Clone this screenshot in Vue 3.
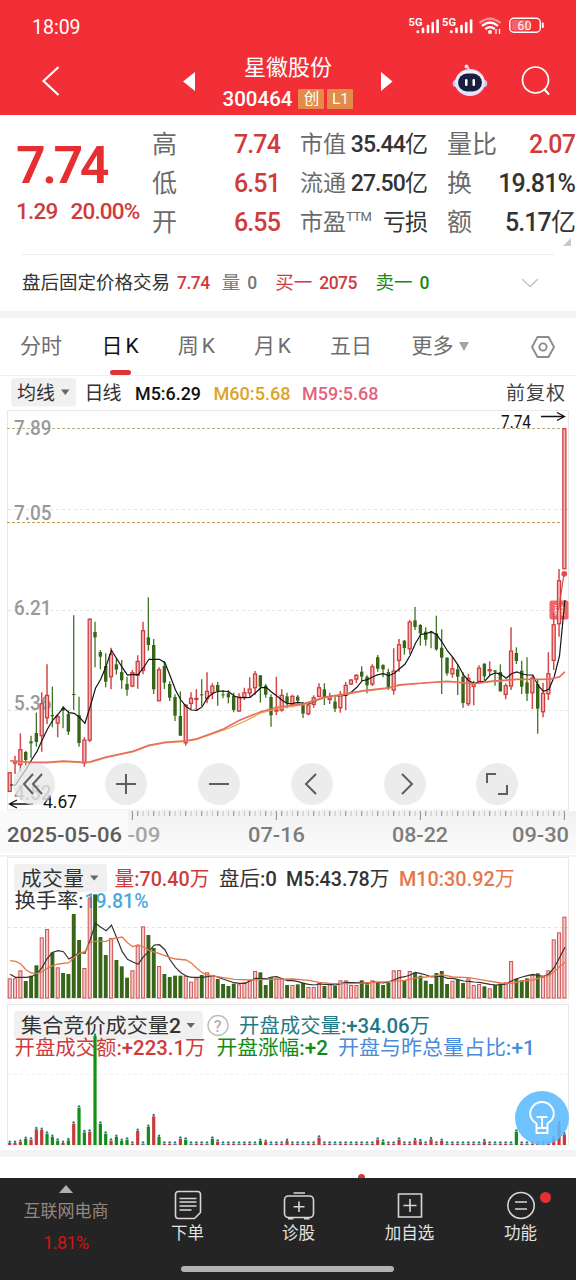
<script setup>
import { computed } from 'vue'

const STEP = 16 / 3
const FIRST = 9.7

const quotes = [
  [
    { label: '高', value: '7.74', tone: 'up' },
    { label: '低', value: '6.51', tone: 'up' },
    { label: '开', value: '6.55', tone: 'up' }
  ],
  [
    { label: '市值', value: '35.44', unit: '亿' },
    { label: '流通', value: '27.50', unit: '亿' },
    { label: '市盈', sup: 'TTM', unit: '亏损' }
  ],
  [
    { label: '量比', value: '2.07', tone: 'up' },
    { label: '换', value: '19.81%' },
    { label: '额', value: '5.17', unit: '亿' }
  ]
]

const tabs = ['分时', '日K', '周K', '月K', '五日']
const activeTab = '日K'

// [rising, high, body top, body bottom, low] in thirds of a pixel
const candleData = [
  [1, 577, 577, 633, 633], [1, 527, 543, 548, 582], [1, 460, 508, 553, 575], [0, 513, 516, 540, 557],
  [0, 467, 484, 490, 535], [0, 398, 459, 486, 500], [1, 337, 370, 466, 515], [1, 253, 345, 412, 432],
  [0, 320, 405, 409, 442], [1, 405, 409, 428, 472], [0, 378, 384, 392, 445], [0, 392, 402, 455, 465],
  [0, 106, 342, 345, 390], [0, 350, 405, 489, 500], [1, 472, 479, 548, 560], [1, 115, 117, 479, 486],
  [0, 125, 156, 172, 262], [0, 210, 216, 230, 268], [0, 220, 258, 305, 322], [1, 203, 222, 289, 328],
  [0, 233, 253, 269, 284], [0, 240, 276, 301, 326], [0, 290, 312, 329, 347], [1, 270, 277, 317, 322],
  [1, 226, 243, 285, 326], [1, 125, 151, 270, 283], [0, 52, 172, 195, 212], [0, 177, 195, 328, 342],
  [1, 262, 268, 361, 362], [0, 243, 258, 308, 327], [0, 304, 312, 353, 363], [0, 343, 351, 407, 423],
  [0, 334, 408, 467, 468], [1, 373, 374, 487, 497], [1, 337, 354, 369, 387], [1, 328, 354, 357, 390],
  [0, 298, 343, 345, 378], [1, 277, 333, 355, 370], [1, 310, 317, 338, 358], [0, 306, 315, 333, 377],
  [0, 330, 343, 346, 355], [0, 330, 340, 352, 370], [0, 338, 348, 390, 397], [1, 340, 350, 392, 395],
  [1, 323, 337, 350, 360], [1, 292, 326, 338, 350], [1, 273, 281, 322, 345], [0, 285, 286, 320, 368],
  [0, 312, 317, 344, 353], [0, 343, 351, 406, 440], [1, 290, 388, 392, 405], [1, 327, 345, 389, 395],
  [0, 338, 349, 370, 385], [1, 344, 348, 372, 372], [0, 345, 350, 362, 375], [0, 365, 372, 401, 414],
  [1, 368, 374, 400, 406], [1, 346, 352, 372, 383], [1, 310, 322, 348, 352], [0, 310, 328, 352, 375],
  [1, 338, 352, 357, 372], [0, 345, 365, 386, 396], [1, 333, 344, 382, 398], [1, 306, 315, 344, 390],
  [1, 297, 299, 311, 315], [1, 283, 285, 296, 310], [0, 259, 275, 290, 303], [0, 286, 290, 316, 340],
  [1, 253, 259, 311, 318], [0, 225, 232, 266, 275], [0, 253, 255, 268, 292], [0, 266, 276, 325, 330],
  [1, 205, 272, 329, 344], [1, 177, 193, 240, 275], [0, 180, 182, 204, 224], [1, 120, 125, 205, 222],
  [0, 81, 121, 141, 150], [0, 132, 135, 160, 197], [0, 142, 155, 179, 197], [0, 152, 155, 160, 205],
  [0, 107, 160, 208, 212], [0, 148, 203, 233, 342], [0, 232, 233, 280, 287], [1, 230, 265, 280, 293],
  [0, 252, 268, 290, 345], [0, 277, 290, 369, 383], [1, 282, 294, 370, 378], [1, 302, 310, 318, 376],
  [1, 256, 263, 303, 305], [0, 250, 251, 289, 301], [1, 244, 268, 271, 287], [0, 270, 271, 275, 317],
  [0, 253, 276, 334, 335], [1, 310, 316, 342, 358], [1, 142, 212, 317, 330], [0, 202, 219, 243, 252],
  [0, 242, 272, 320, 342], [0, 232, 307, 341, 363], [1, 285, 293, 337, 387], [0, 300, 312, 386, 461],
  [1, 308, 339, 394, 412], [1, 217, 280, 340, 360], [1, 98, 133, 240, 270], [1, -33, 1, 130, 170],
  [1, -456, -455, -35, -33]
]

const ma5 = [
  615, 615, 590, 568, 540, 515, 480, 447, 420, 402, 382, 398, 400, 412, 430, 380, 325, 297, 257, 211, 237, 262,
  285, 283, 284, 263, 238, 238, 238, 248, 288, 330, 360, 380, 390, 391, 380, 353, 340, 334, 333, 335, 348, 353,
  353, 352, 338, 323, 322, 336, 348, 361, 371, 370, 367, 370, 371, 365, 358, 351, 349, 348, 347, 346, 336, 322,
  302, 299, 290, 284, 281, 287, 280, 266, 253, 226, 190, 163, 161, 155, 165, 187, 213, 232, 256, 285, 303, 310,
  306, 303, 285, 279, 283, 295, 281, 276, 282, 285, 285, 317, 334, 328, 290, 228, 60
]
// slow averages are kept as [bar, value] pairs
const ma60 = [
  [0, 543], [4, 549], [7, 549], [10, 545], [14, 549], [15, 547], [18, 533], [23, 516], [26, 498], [29, 489],
  [33, 484], [35, 478], [38, 461], [41, 445], [44, 424], [47, 399], [50, 387], [55, 374], [59, 354], [63, 343],
  [66, 334], [71, 325], [73, 316], [78, 309], [82, 305], [87, 312], [90, 306], [95, 299], [98, 299], [101, 299],
  [103, 291], [104, 276]
]
const ma59 = [
  [0, 542], [4, 547], [7, 547], [10, 543], [14, 547], [15, 545], [18, 531], [23, 514], [26, 496], [29, 487],
  [33, 482], [35, 476], [38, 459], [40, 447], [43, 421], [47, 395], [50, 382], [55, 371], [59, 351], [63, 341],
  [66, 332], [71, 323], [73, 314], [78, 308], [82, 304], [87, 311], [90, 304], [95, 298], [98, 298], [101, 298],
  [103, 290], [104, 275]
]

const volumeData = [
  370, 370, 346, 378, 362, 331, 247, 222, 292, 337, 354, 357, 177, 255, 339, 128, 118, 246, 300, 249, 315, 334,
  368, 346, 272, 214, 240, 279, 333, 357, 366, 362, 362, 362, 380, 370, 360, 352, 362, 372, 387, 393, 386, 388,
  382, 375, 348, 352, 390, 367, 370, 370, 390, 390, 388, 383, 396, 396, 384, 393, 388, 392, 376, 376, 390, 390,
  376, 388, 376, 382, 390, 382, 346, 345, 375, 348, 352, 362, 377, 387, 354, 348, 387, 377, 375, 384, 370, 390,
  387, 394, 400, 390, 386, 382, 318, 371, 376, 370, 360, 355, 366, 346, 253, 232, 185
]
const volMa5 = [
  358, 367, 367, 367, 365, 356, 337, 309, 292, 287, 290, 312, 303, 292, 295, 255, 205, 217, 227, 210, 250, 290,
  313, 321, 328, 305, 289, 270, 269, 284, 315, 337, 353, 363, 367, 367, 367, 365, 362, 367, 373, 378, 383, 385,
  385, 378, 370, 371, 371, 366, 365, 371, 377, 377, 380, 385, 388, 390, 387, 388, 388, 390, 386, 382, 383, 383,
  382, 385, 381, 382, 384, 380, 374, 368, 365, 360, 352, 356, 360, 366, 364, 364, 370, 370, 374, 378, 379, 381,
  382, 385, 388, 390, 389, 387, 378, 371, 366, 362, 358, 362, 364, 357, 338, 308, 277
]
const volMa10 = [
  [0, 317], [1, 319], [2, 327], [3, 345], [4, 354], [5, 356], [6, 350], [7, 340], [8, 332], [9, 327], [11, 323],
  [12, 307], [13, 294], [14, 290], [15, 262], [16, 259], [18, 259], [19, 252], [21, 246], [22, 263], [23, 275],
  [24, 269], [25, 276], [26, 286], [28, 296], [30, 308], [31, 312], [33, 315], [34, 325], [35, 340], [36, 353],
  [37, 360], [40, 368], [42, 373], [45, 375], [48, 373], [53, 372], [56, 376], [58, 382], [60, 385], [64, 386],
  [68, 382], [71, 380], [74, 376], [76, 369], [78, 366], [81, 359], [83, 366], [86, 368], [89, 376], [92, 384],
  [94, 385], [96, 378], [98, 375], [100, 365], [101, 361], [102, 350], [103, 335], [104, 322]
]

// opening auction bars that stand out, the rest are flat
const auctionPeaks = {
  0: [1, 864], 1: [1, 864], 2: [1, 861], 3: [0, 852], 4: [1, 854], 5: [1, 823], 6: [1, 825], 7: [0, 836],
  8: [0, 846], 9: [0, 857], 10: [1, 864], 11: [0, 856], 12: [1, 806], 13: [0, 758], 14: [0, 832], 15: [1, 830],
  16: [0, 543], 17: [0, 806], 18: [0, 836], 19: [1, 857], 20: [0, 846], 21: [0, 858], 22: [0, 854],
  24: [1, 828], 26: [0, 816], 27: [1, 784], 28: [0, 846], 32: [1, 851], 33: [0, 854], 38: [0, 851], 39: [1, 860],
  47: [0, 858], 48: [1, 861], 52: [1, 858], 58: [1, 848], 69: [1, 854], 70: [0, 860], 73: [1, 854], 76: [1, 856],
  77: [1, 859], 79: [1, 853], 81: [1, 858], 89: [1, 859], 95: [0, 830], 102: [1, 850], 103: [1, 805],
  104: [1, 838]
}

const barX = (i) => FIRST + i * STEP
const priceY = (v) => 170 + v / 3

const toPoints = (values, y) =>
  values
    .map((v, i) => (Array.isArray(v) ? v : [i, v]))
    .map(([i, v]) => `${(barX(i) + 0.5).toFixed(1)},${y(v).toFixed(1)}`)
    .join(' ')

const candles = computed(() =>
  candleData.map(([up, high, top, bottom, low], i) => ({
    up,
    x: barX(i),
    high: priceY(high),
    top: priceY(top),
    height: Math.max((bottom - top) / 3, 1),
    bottom: priceY(bottom),
    low: priceY(low)
  }))
)

const volumes = computed(() =>
  volumeData.map((v, i) => ({ up: candleData[i][0], x: barX(i), y: v / 3, height: (429 - v) / 3 }))
)

const auctions = candleData.map((_, i) => {
  const [up, v] = auctionPeaks[i] || [1, 866]
  return { up, x: barX(i), y: v / 3 - 148, height: (870 - v) / 3, flat: !auctionPeaks[i] && i % 3 === 1 }
})

const ticks = Array.from({ length: 82 }, (_, n) => {
  const i = n + 23
  return { x: barX(i), major: (i - 23) % 27 === 0, dark: i % 3 === 0 }
})

const priceLabels = [
  { text: '7.89', y: 25 },
  { text: '7.05', y: 109.5 },
  { text: '6.21', y: 205 },
  { text: '5.36', y: 300 },
  { text: '4.52', y: 390 }
]

const dateLabels = [
  { text: '07-16', x: 248, w: 57 },
  { text: '08-22', x: 392, w: 56 },
  { text: '09-30', x: 512, w: 57 }
]

const chartButtons = [
  'M-1 -10 L-10 0 L-1 10 M8 -10 L-1 0 L8 10',
  'M-10 0 H10 M0 -10 V10',
  'M-10 0 H10',
  'M4 -10 L-6 0 L4 10',
  'M-3 -10 L7 0 L-3 10',
  'M-10 -1 V-10 H-1 M10 1 V10 H1'
]
</script>

<template>
  <div class="phone">
    <header class="header">
      <div class="status">
        <span class="clock">18:09</span>
        <svg class="status-icons" width="140" height="20" viewBox="0 0 140 20">
          <g v-for="x in [0, 33.5]" :key="x" fill="#fff">
            <text :x="x + 0.5" y="9.5" class="five-g" textLength="14" lengthAdjust="spacingAndGlyphs">5G</text>
            <rect :x="x + 8.5" y="14.2" width="2.6" height="3" rx="1" />
            <rect :x="x + 13.7" y="11.5" width="2.6" height="5.7" rx="1" />
            <rect :x="x + 18.7" y="8.7" width="2.6" height="8.5" rx="1" />
            <rect :x="x + 23.4" y="6" width="2.6" height="11.2" rx="1" />
            <rect :x="x + 28.3" y="3.2" width="2.6" height="14" rx="1" />
          </g>
          <g fill="none" stroke="#fff" stroke-width="2.3">
            <path d="M71.5 7 Q82 -1.6 92.5 7" opacity=".45" />
            <path d="M74 9.8 Q82 3.2 90 9.8" />
            <path d="M77.3 13 Q82 9.2 86.7 13" />
          </g>
          <circle cx="82" cy="16" r="2" fill="#fff" />
          <path d="M88 13 V18 M91.5 13 V18" stroke="#fff" stroke-width="1.3" />
          <rect x="101.8" y="2.3" width="30.5" height="14" rx="4" fill="none" stroke="#fff" stroke-width="1.4" />
          <rect x="103.5" y="4" width="18" height="10.6" rx="2.5" fill="#fff" opacity=".25" />
          <rect x="133.8" y="6.5" width="2" height="5.5" rx="1" fill="#fff" />
          <text x="109.5" y="13.7" class="battery" textLength="14">60</text>
        </svg>
      </div>
      <div class="title-bar">
        <svg class="back" width="20" height="32" viewBox="0 0 20 32">
          <path d="M17.5 2 L2.5 16 L17.5 30" fill="none" stroke="#fff" stroke-width="2.2" />
        </svg>
        <svg class="prev" width="12" height="19" viewBox="0 0 12 19"><path d="M12 0 V19 L0 9.5 Z" fill="#fff" /></svg>
        <div class="stock">
          <div class="stock-name">星徽股份</div>
          <div class="stock-code">
            <span class="code">300464</span>
            <span class="badge">创</span>
            <span class="badge">L1</span>
          </div>
        </div>
        <svg class="next" width="12" height="19" viewBox="0 0 12 19"><path d="M0 0 V19 L11.5 9.5 Z" fill="#fff" /></svg>
        <svg class="robot" width="36" height="34" viewBox="0 0 36 34">
          <path d="M17 5 L15 2.5" stroke="#e9e2fb" stroke-width="1.6" />
          <circle cx="14.5" cy="2.5" r="2" fill="#f3d6e6" />
          <circle cx="4.5" cy="19.5" r="3.8" fill="#c9c6f5" />
          <circle cx="31.5" cy="19.5" r="3.8" fill="#c9c6f5" />
          <ellipse cx="18" cy="18.5" rx="15" ry="13.5" fill="#e4e1fb" />
          <ellipse cx="18" cy="17.5" rx="13" ry="11" fill="#f4f2ff" />
          <rect x="6" y="9.5" width="24" height="18" rx="9" fill="#17213f" />
          <rect x="13" y="15" width="2.5" height="7" rx="1.2" fill="#fff" />
          <rect x="20.5" y="15" width="2.5" height="7" rx="1.2" fill="#fff" />
        </svg>
        <svg class="search" width="30" height="30" viewBox="0 0 30 30">
          <circle cx="14.5" cy="14" r="13" fill="none" stroke="#fff" stroke-width="1.7" />
          <path d="M23 23 L28 28.5" stroke="#fff" stroke-width="2" />
        </svg>
      </div>
    </header>

    <section class="quote">
      <div class="quote-main">
        <div class="price-block">
          <div class="price">7.74</div>
          <div class="change"><span>1.29</span><span>20.00%</span></div>
        </div>
        <div v-for="(column, c) in quotes" :key="c" class="quote-col" :class="'col-' + c">
          <div v-for="item in column" :key="item.label" class="quote-item">
            <span class="label">{{ item.label }}<sup v-if="item.sup">{{ item.sup }}</sup></span>
            <span class="value" :class="item.tone">{{ item.value }}<span v-if="item.unit" class="unit">{{ item.unit }}</span></span>
          </div>
        </div>
        <i class="corner"></i>
      </div>
      <div class="after-hours">
        <span class="ah-title">盘后固定价格交易</span>
        <span class="up num">7.74</span>
        <span class="muted ah-vol">量</span>
        <span class="muted num">0</span>
        <span class="up ah-buy">买一</span>
        <span class="up num">2075</span>
        <span class="down ah-sell">卖一</span>
        <span class="down num">0</span>
        <svg class="expand" width="18" height="10" viewBox="0 0 18 10">
          <path d="M1 1 L9 8.5 L17 1" fill="none" stroke="#c4c4c4" stroke-width="1.5" />
        </svg>
      </div>
    </section>
    <div class="band"></div>

    <nav class="tabs">
      <span
        v-for="tab in tabs"
        :key="tab"
        class="tab"
        :class="{ active: tab === activeTab, spaced: tab.endsWith('K') }"
      >{{ tab }}</span>
      <span class="tab more">更多<i class="caret"></i></span>
      <svg class="settings" width="24" height="22" viewBox="0 0 24 22">
        <path d="M6.5 1 H17.5 L23 11 L17.5 21 H6.5 L1 11 Z" fill="none" stroke="#8c8c8c" stroke-width="1.9" stroke-linejoin="round" />
        <circle cx="12" cy="11" r="3.6" fill="none" stroke="#8c8c8c" stroke-width="1.9" />
      </svg>
    </nav>

    <div class="kline">
      <svg width="576" height="479" viewBox="0 -34 576 479">
        <defs>
          <linearGradient id="axis" x1="0" y1="0" x2="0" y2="1">
            <stop offset="0" stop-color="#f1f1f1" />
            <stop offset="1" stop-color="#fbfbfb" />
          </linearGradient>
        </defs>
        <rect x="11" y="-32" width="65" height="28.5" rx="3" fill="#f0f0f0" />
        <g class="legend">
          <text x="17" y="-10.5" textLength="38" fill="#333" class="han">均线</text>
          <path d="M61 -20.5 h8.5 l-4.25 5.5 z" fill="#666" />
          <text x="84.5" y="-10.5" textLength="37" fill="#333" class="han">日线</text>
          <text x="135" y="-10.5" textLength="66" lengthAdjust="spacingAndGlyphs" fill="#111">M5:6.29</text>
          <text x="213.5" y="-10.5" textLength="77" lengthAdjust="spacingAndGlyphs" fill="#dca32a">M60:5.68</text>
          <text x="302" y="-10.5" textLength="76.5" lengthAdjust="spacingAndGlyphs" fill="#e0647a">M59:5.68</text>
          <text x="506" y="-10.5" textLength="59" fill="#444" class="han">前复权</text>
        </g>

        <rect x="7.5" y="0.5" width="561" height="399.5" fill="none" stroke="#e9e9e9" />
        <g stroke="#e2e2e2" stroke-dasharray="3 3">
          <path d="M8 99.5 H568 M8 200.5 H568 M8 300.5 H568" />
        </g>
        <g stroke-dasharray="3 2">
          <path d="M7 18.5 H566" stroke="#b9ad7c" />
          <path d="M7 112.5 H566" stroke="#bd9a50" />
        </g>

        <g class="price-label">
          <text v-for="p in priceLabels" :key="p.text" x="14" :y="p.y" textLength="37.5" lengthAdjust="spacingAndGlyphs">{{ p.text }}</text>
        </g>

        <rect x="549.5" y="190.5" width="19" height="19" rx="2" fill="#f2666b" />
        <text x="554" y="205" class="mark">融</text>

        <g v-for="(c, i) in candles" :key="i">
          <template v-if="c.up">
            <path :d="`M${c.x} ${c.high} V${c.top} M${c.x} ${c.bottom} V${c.low}`" stroke="#d44a4a" stroke-width="1.5" />
            <rect :x="c.x - 1.5" :y="c.top + 0.4" width="3" :height="c.height" fill="#f4bcbc" stroke="#d03c3c" stroke-width="1.3" />
          </template>
          <template v-else>
            <path :d="`M${c.x} ${c.high} V${c.low}`" stroke="#3f7423" stroke-width="1.3" />
            <rect :x="c.x - 1.7" :y="c.top" width="3.4" :height="c.height" fill="#376619" />
          </template>
        </g>
        <polyline :points="toPoints(ma5, priceY)" fill="none" stroke="#151515" stroke-width="1.2" />
        <polyline :points="toPoints(ma60, priceY)" fill="none" stroke="#e5a332" stroke-width="1.2" />
        <polyline :points="toPoints(ma59, priceY)" fill="none" stroke="#e8696b" stroke-width="1.5" />
        <path d="M564 164 L558.5 200" stroke="#dd3c3c" stroke-width="1.1" />
        <circle cx="564.3" cy="163.8" r="2.9" fill="#e84a4a" />

        <g class="extreme">
          <text x="501" y="18" textLength="30" lengthAdjust="spacingAndGlyphs">7.74</text>
          <text x="43" y="398" textLength="34" lengthAdjust="spacingAndGlyphs">4.67</text>
        </g>
        <g fill="none" stroke="#111" stroke-width="1.3">
          <path d="M541 6.5 H564.5 M557 2.5 L564.5 6.5 L557 10.5" />
          <path d="M33 394 H9.5 M17 390 L9.5 394 L17 398" />
        </g>

        <rect x="0" y="401" width="576" height="42" fill="url(#axis)" />
        <rect x="0" y="401" width="128" height="42" fill="#fafafa" />
        <path
          v-for="t in ticks"
          :key="t.x"
          :d="`M${t.x} 401 v${t.major ? 9 : 5}`"
          :stroke="t.dark || t.major ? '#8a8a8a' : '#c4c4c4'"
          stroke-width="1"
        />
        <g class="date">
          <text x="7" y="432" textLength="115" lengthAdjust="spacingAndGlyphs" fill="#5c5c5c">2025-05-06</text>
          <text x="127.5" y="432" textLength="33" lengthAdjust="spacingAndGlyphs" class="date-under">-09</text>
          <text v-for="d in dateLabels" :key="d.text" :x="d.x" y="432" :textLength="d.w" lengthAdjust="spacingAndGlyphs">{{ d.text }}</text>
        </g>
      </svg>
      <div class="chart-buttons">
        <button v-for="(d, i) in chartButtons" :key="i">
          <svg width="42" height="42" viewBox="-21 -21 42 42">
            <path :d="d" fill="none" stroke="#5e5e5e" stroke-width="2" />
          </svg>
        </button>
      </div>
    </div>

    <svg class="volume" width="576" height="148" viewBox="0 0 576 148">
      <path d="M0 1 H576" stroke="#efefef" stroke-width="1.5" />
      <rect x="7.5" y="2.5" width="561" height="141" fill="#fff" stroke="#e9e9e9" />
      <path d="M8 72.5 H568" stroke="#e2e2e2" stroke-dasharray="3 3" />
      <rect x="14" y="9" width="93" height="28" rx="3" fill="#f0f0f0" />
      <g class="sub-legend">
        <text x="21" y="31" textLength="63" fill="#333" class="han">成交量</text>
        <path d="M90 20.5 h8.5 l-4.25 5 z" fill="#666" />
        <text x="114.5" y="30.5" textLength="95" lengthAdjust="spacingAndGlyphs" fill="#cf3b3b"><tspan class="han">量</tspan>:70.40<tspan class="han">万</tspan></text>
        <text x="219" y="30.5" textLength="58" lengthAdjust="spacingAndGlyphs" fill="#333"><tspan class="han">盘后</tspan>:0</text>
        <text x="286" y="30.5" textLength="103.5" lengthAdjust="spacingAndGlyphs" fill="#333">M5:43.78<tspan class="han">万</tspan></text>
        <text x="399" y="30.5" textLength="115.5" lengthAdjust="spacingAndGlyphs" fill="#e5784a">M10:30.92<tspan class="han">万</tspan></text>
        <text x="14.5" y="52.5" textLength="69" lengthAdjust="spacingAndGlyphs" fill="#333" class="han">换手率:</text>
        <text x="84.5" y="52.5" textLength="64" lengthAdjust="spacingAndGlyphs" fill="#4aa8dc">19.81%</text>
      </g>
      <template v-for="(v, i) in volumes" :key="i">
        <rect v-if="v.up" :x="v.x - 1.5" :y="v.y + 0.5" width="3.1" :height="v.height - 0.5" fill="#d93636" fill-opacity=".28" stroke="#cf5252" stroke-width="1" />
        <rect v-else :x="v.x - 1.9" :y="v.y" width="3.9" :height="v.height" fill="#376619" />
      </template>
      <polyline :points="toPoints(volMa5, (v) => v / 3)" fill="none" stroke="#333" stroke-width="1.2" />
      <polyline :points="toPoints(volMa10, (v) => v / 3)" fill="none" stroke="#e5784a" stroke-width="1.3" />
    </svg>

    <div class="auction">
      <svg width="576" height="147" viewBox="0 0 576 147">
        <rect x="7.5" y="1.5" width="561" height="140.5" fill="#fff" stroke="#e9e9e9" />
        <path d="M8 71.5 H568" stroke="#f0f0f0" stroke-dasharray="3 3" />
        <rect x="14" y="8" width="189" height="28.5" rx="3" fill="#f0f0f0" />
        <g class="sub-legend">
          <text x="21" y="30" textLength="160" lengthAdjust="spacingAndGlyphs" fill="#333"><tspan class="han">集合竞价成交量</tspan>2</text>
          <path d="M186.5 20 h8.5 l-4.25 5 z" fill="#666" />
          <circle cx="218" cy="22.5" r="10" fill="none" stroke="#bdbdbd" stroke-width="1.4" />
          <text x="213.7" y="28.5" class="help">?</text>
          <text x="239" y="30" textLength="191" lengthAdjust="spacingAndGlyphs" fill="#1f7a85"><tspan class="han">开盘成交量</tspan>:+34.06<tspan class="han">万</tspan></text>
          <text x="14.5" y="52" textLength="191" lengthAdjust="spacingAndGlyphs" fill="#cf3b3b"><tspan class="han">开盘成交额</tspan>:+223.1<tspan class="han">万</tspan></text>
          <text x="216.5" y="52" textLength="111.5" lengthAdjust="spacingAndGlyphs" fill="#138a13"><tspan class="han">开盘涨幅</tspan>:+2</text>
          <text x="338" y="52" textLength="197" lengthAdjust="spacingAndGlyphs" fill="#4a8cdb"><tspan class="han">开盘与昨总量占比</tspan>:+1</text>
        </g>
        <template v-for="(a, i) in auctions" :key="i">
          <rect :x="a.x - 1.6" :y="a.y" width="3.2" :height="a.height" :fill="a.flat ? '#4a7f86' : a.up ? '#c93a3a' : '#138f17'" />
          <circle :cx="a.x" :cy="a.y - 1.3" r="1.2" fill="#2b7a86" />
        </template>
      </svg>
      <div class="tip">
        <svg width="28" height="36" viewBox="0 0 28 36">
          <g fill="none" stroke="#fff" stroke-width="1.9">
            <path d="M8.5 28 V23.5 C4.5 21 2.2 17.8 2.2 13.8 A11.8 11.8 0 0 1 25.8 13.8 C25.8 17.8 23.5 21 19.5 23.5 V33 H8.5 V28 H19.5" />
            <path d="M8.5 17 H19.5 M14 17 V28" />
          </g>
        </svg>
      </div>
    </div>
    <div class="band"></div>
    <div class="peek"><i></i></div>

    <footer class="footer">
      <div class="sector">
        <i class="sector-up"></i>
        <span class="sector-name">互联网电商</span>
        <span class="sector-change">1.81%</span>
      </div>
      <div class="action">
        <svg width="32" height="30" viewBox="0 0 32 30">
          <g fill="none" stroke="#d6d6d6" stroke-width="1.6">
            <path d="M6.5 1.5 H25.5 Q28.5 1.5 28.5 4.5 V22.5 L22.5 28.5 H6.5 Q3.5 28.5 3.5 25.5 V4.5 Q3.5 1.5 6.5 1.5 Z" />
            <path d="M7.5 8.5 H24.5 M7.5 12 H24.5 M7.5 16 H24.5 M7.5 20 H19.5" />
          </g>
        </svg>
        <span>下单</span>
      </div>
      <div class="action">
        <svg width="32" height="30" viewBox="0 0 32 30">
          <g fill="none" stroke="#d6d6d6" stroke-width="1.6">
            <rect x="1.5" y="6" width="29" height="21.5" rx="4" />
            <path d="M10.5 3 H22 M16 11.5 V22 M10.5 16.7 H21.5" />
            <path d="M5 28.5 H10.5 M21 28.5 H26.5" stroke-width="2" />
          </g>
        </svg>
        <span>诊股</span>
      </div>
      <div class="action">
        <svg width="32" height="30" viewBox="0 0 32 30">
          <path d="M4.5 4 H27.5 V27 H4.5 Z M16 9 V22 M9.5 15.5 H22.5" fill="none" stroke="#d6d6d6" stroke-width="1.6" />
        </svg>
        <span>加自选</span>
      </div>
      <div class="action">
        <svg width="32" height="30" viewBox="0 0 32 30">
          <ellipse cx="16" cy="15.5" rx="13.2" ry="13" fill="none" stroke="#d6d6d6" stroke-width="1.6" />
          <path d="M10 12 H22 M10 19 H22" stroke="#d6d6d6" stroke-width="1.6" />
        </svg>
        <span>功能</span>
        <i class="dot"></i>
      </div>
      <i class="home"></i>
    </footer>
  </div>
</template>

<style>
body {
  margin: 0;
  background: #fff;
}
</style>

<style scoped>
.phone {
  width: 576px;
  height: 1280px;
  overflow: hidden;
  background: #fff;
  color: #333;
  font-family: Roboto, "Noto Sans CJK SC", sans-serif;
}

svg {
  display: block;
  flex: none;
}

.header {
  height: 115px;
  background: #f22f37;
  color: #fff;
}

.status {
  display: flex;
  align-items: flex-start;
  justify-content: space-between;
  height: 50px;
  padding: 16px 28px 0 32px;
  box-sizing: border-box;
}

.clock {
  font-size: 19.5px;
  line-height: 23px;
}

.five-g {
  font-size: 11.5px;
  font-weight: 600;
}

.battery {
  fill: #fff;
  font-size: 12px;
}

.title-bar {
  display: flex;
  align-items: center;
  height: 62px;
}

.back {
  margin-left: 41px;
}

.prev {
  margin-left: 122px;
}

.stock {
  width: 186px;
  padding-top: 2px;
  text-align: center;
}

.stock-name {
  height: 33px;
  line-height: 33px;
  font-size: 22px;
}

.stock-code {
  display: flex;
  align-items: center;
  justify-content: center;
  gap: 3px;
  height: 29px;
}

.code {
  margin-right: 3px;
  font-size: 20.5px;
  font-weight: 500;
}

.badge {
  width: 26px;
  height: 20px;
  border-radius: 1px;
  background: #e38b49;
  font-size: 15.5px;
  line-height: 20px;
}

.robot {
  margin-left: 59px;
}

.search {
  margin-left: 33px;
}

.quote {
  height: 196px;
}

.quote-main {
  position: relative;
  display: flex;
  height: 139px;
  margin-left: 16px;
}

.price-block {
  width: 136px;
  color: #e62f33;
}

.price {
  height: 83px;
  padding-top: 21px;
  box-sizing: border-box;
  font-size: 52px;
  line-height: 60px;
  font-weight: 600;
  letter-spacing: -3.5px;
}

.change {
  display: flex;
  gap: 13px;
  line-height: 26px;
  font-size: 22.5px;
  font-weight: 500;
  letter-spacing: -0.8px;
  color: #cf3b3b;
  white-space: nowrap;
}

.quote-col {
  padding-top: 10px;
}

.quote-item {
  display: flex;
  justify-content: space-between;
  height: 39px;
  line-height: 39px;
  white-space: nowrap;
}

.col-0 {
  width: 128px;
  font-size: 25px;
}

.col-1 {
  width: 127px;
  margin-left: 20px;
  font-size: 23px;
}

.col-2 {
  width: 128px;
  margin-left: 20px;
  font-size: 25px;
}

.label {
  color: #6b6b6b;
}

.label sup {
  font-size: 13px;
  line-height: 0;
  vertical-align: 9px;
  letter-spacing: -0.5px;
}

.value {
  font-weight: 500;
  letter-spacing: -0.9px;
}

.unit,
.han {
  font-weight: 400;
}

.up {
  color: #cf3b3b;
}

.down {
  color: #138a13;
}

.muted {
  color: #777;
}

.corner {
  position: absolute;
  right: 5px;
  bottom: 8px;
  border-left: 8px solid transparent;
  border-bottom: 8px solid #c8c8c8;
}

.after-hours {
  display: flex;
  align-items: center;
  height: 57px;
  margin: 0 22px;
  border-top: 1px solid #ececec;
  box-sizing: border-box;
  font-size: 18.5px;
  line-height: 56px;
  white-space: nowrap;
}

.after-hours .num {
  margin-left: 7px;
  font-size: 17.5px;
  font-weight: 500;
  letter-spacing: -0.5px;
}

.ah-vol {
  margin-left: 12px;
}

.ah-buy,
.ah-sell {
  margin-left: 18.5px;
}

.expand {
  margin-left: auto;
  margin-right: 15px;
}

.band {
  height: 7px;
  background: #f3f3f3;
}

.tabs {
  display: flex;
  align-items: center;
  height: 58px;
  padding: 0 21px 0 20px;
  border-bottom: 1px solid #f0f0f0;
  box-sizing: border-box;
  font-size: 21px;
  color: #6e6e6e;
}

.tab {
  position: relative;
  margin-right: 39.5px;
  line-height: 57px;
}

.tab.spaced {
  margin-right: 36px;
  letter-spacing: 3px;
}

.tab.active {
  color: #111;
}

.tab.active::after {
  content: "";
  position: absolute;
  left: 8px;
  bottom: 0;
  width: 21px;
  height: 5px;
  border-radius: 3px;
  background: #e03335;
}

.more {
  display: flex;
  align-items: center;
}

.caret {
  margin-left: 5px;
  border: 5.5px solid transparent;
  border-top: 9px solid #a5a5a5;
  border-bottom: 0;
}

.settings {
  margin-left: auto;
}

.tab.more {
  margin-right: 0;
}

.kline,
.auction {
  position: relative;
}

.legend {
  font-size: 19px;
  font-weight: 500;
}

.sub-legend {
  font-size: 20.5px;
  font-weight: 500;
}

.help {
  fill: #b0b0b0;
  font-size: 16px;
}

.price-label {
  fill: #999;
  font-size: 20px;
  font-weight: 500;
}

.mark {
  fill: #fff;
  font-size: 11px;
}

.extreme {
  fill: #111;
  font-size: 18px;
}

.date {
  fill: #7c7c7c;
  font-size: 20.5px;
  font-weight: 500;
}

.date-under {
  fill: #a6a6a6;
}

.chart-buttons {
  position: absolute;
  left: 12.5px;
  top: 387px;
  display: flex;
  gap: 50.8px;
}

.chart-buttons button {
  width: 42px;
  height: 42px;
  padding: 0;
  border: 0;
  border-radius: 50%;
  background: rgba(228, 228, 228, 0.72);
}

.tip {
  position: absolute;
  right: 7px;
  top: 88px;
  display: flex;
  align-items: center;
  justify-content: center;
  width: 54px;
  height: 54px;
  border-radius: 50%;
  background: rgba(90, 187, 255, 0.88);
}

.peek {
  display: flex;
  align-items: flex-end;
  height: 21px;
  overflow: hidden;
}

.peek i {
  width: 7px;
  height: 7px;
  margin: 0 0 -3px 358px;
  border-radius: 50%;
  background: #cf3b3b;
}

.footer {
  position: relative;
  display: flex;
  height: 102px;
  background: #242424;
  color: #e2e2e2;
}

.sector {
  display: flex;
  flex-direction: column;
  align-items: center;
  width: 132px;
}

.sector-up {
  margin-top: 7px;
  border: 7px solid transparent;
  border-bottom: 8px solid #b0b0b0;
  border-top: 0;
}

.sector-name {
  margin-top: 6px;
  font-size: 17px;
  line-height: 25px;
  color: #948780;
}

.sector-change {
  margin-top: 7px;
  font-size: 18px;
  line-height: 24px;
  color: #d21414;
  letter-spacing: -0.6px;
}

.action {
  position: relative;
  display: flex;
  flex-direction: column;
  align-items: center;
  width: 111px;
  padding-top: 12px;
  font-size: 16.5px;
  line-height: 28px;
}

.dot {
  position: absolute;
  left: 75px;
  top: 14px;
  width: 11px;
  height: 11px;
  border-radius: 50%;
  background: #e62f33;
}

.home {
  position: absolute;
  left: 181px;
  bottom: 8px;
  width: 213px;
  height: 6px;
  border-radius: 3px;
  background: #b2b2b2;
}
</style>
